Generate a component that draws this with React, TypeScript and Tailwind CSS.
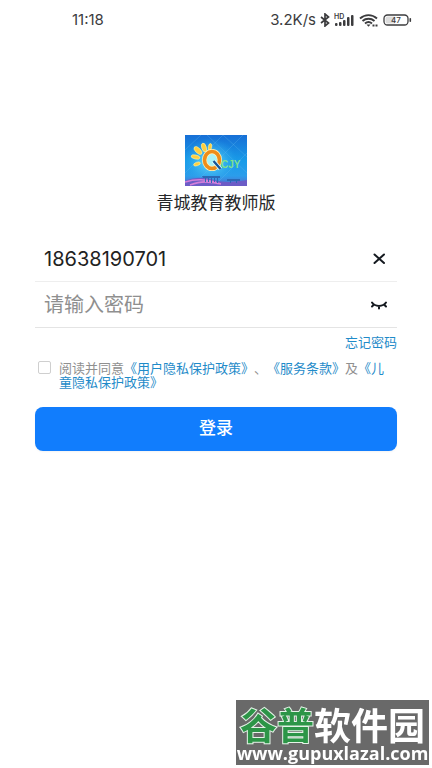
import { useState } from "react";

function StatusBar() {
  return (
    <header className="flex h-10 items-center justify-between pr-5 pl-18 text-[#3c3c3e]">
      <time className="text-[15px]">11:18</time>
      <div className="flex items-center gap-1">
        <span className="text-[15px]">3.2K/s</span>
        <svg width="10" height="14" viewBox="0 0 10 14" fill="none" stroke="currentColor" strokeWidth="1.7" aria-label="蓝牙">
          <path d="M1 4l7.500 6L5 13V1l3.500 3L1 10" />
        </svg>
        <svg width="21" height="14" viewBox="0 0 21 14" aria-label="信号">
          <text x="0" y="6" fontSize="7" fontWeight="600" fill="currentColor">HD</text>
          <g fill="currentColor">
            <rect x="1" y="10" width="2.500" height="3" rx="1" />
            <rect x="5" y="9" width="2.500" height="4" rx="1" />
            <rect x="9" y="7" width="2.500" height="6" rx="1" />
            <rect x="13" y="4" width="2.500" height="9" rx="1" />
            <rect x="17" y="2" width="2.500" height="11" rx="1" />
          </g>
        </svg>
        <svg width="19" height="14" viewBox="0 0 19 14" fill="none" stroke="currentColor" strokeWidth="1.9" aria-label="无线网络">
          <path d="M1 5.500C6 1 13 1 18 5.500M3.500 8c3.500-3 8.500-3 12 0M6 10.500c2-1.700 5-1.700 7 0" />
          <path d="M7.500 11.500h4L9.500 13.700z" fill="currentColor" stroke="none" />
          <path d="M13.500 12.500h5" strokeDasharray="2 1" />
        </svg>
        <svg width="29" height="12" viewBox="0 0 29 12" className="ml-px" aria-label="电量 47">
          <rect x="1" y="1" width="24" height="10" rx="3.500" fill="#fff" stroke="currentColor" strokeWidth="1.3" />
          <path d="M4.500 2.500H12v7H4.500A2 2 0 0 1 2.500 7.500v-3a2 2 0 0 1 2-2z" fill="#ddd" />
          <rect x="26.500" y="4" width="1.600" height="4" rx=".8" fill="currentColor" />
          <text x="13" y="9" fontSize="8" fontWeight="500" textAnchor="middle" fill="currentColor">47</text>
        </svg>
      </div>
    </header>
  );
}

function Logo() {
  return (
    <svg width="62" height="51" viewBox="0 0 62 51" role="img" aria-label="QCJY">
      <defs>
        <linearGradient id="sky" x1="0" y1="0" x2="0" y2="1">
          <stop offset="0" stopColor="#176fd6" />
          <stop offset=".5" stopColor="#189be8" />
          <stop offset=".8" stopColor="#2b9deb" />
          <stop offset="1" stopColor="#5568cb" />
        </linearGradient>
        <radialGradient id="glow">
          <stop offset="0" stopColor="#7ce8fb" />
          <stop offset="1" stopColor="#28a9ee" stopOpacity="0" />
        </radialGradient>
      </defs>
      <rect width="62" height="51" fill="url(#sky)" />
      <ellipse cx="25" cy="26" rx="27" ry="23" fill="url(#glow)" />
      <path d="M0 15L16 0M0 38L38 0M12 46L58 0M30 50L62 18M22 0l40 38M38 0l24 22" stroke="#67bdf2" strokeOpacity=".35" strokeWidth=".8" />
      <path d="M0 46c10-4 19-4 29-1s21 2 33 0v7H0z" fill="#6c5cc6" />
      <path d="M0 47c13-4 21-2 31 0M5 50c14-5 20-3 31-1" stroke="#d37ed9" strokeWidth="1.600" fill="none" />
      <path d="M17 41h18v2h-2v5h-1v-5h-2v4h-1v-4h-2v5h-1v-5h-2v4h-1v-4h-2v4h-1v-4h-2zM42 44h13v2h-3v2h-1v-2h-5v2h-1v-2h-3z" fill="#2b68b5" />
      <g fill="#ffce3d" stroke="#fff4a2" strokeWidth=".6">
        <ellipse cx="10.500" cy="22" rx="4.500" ry="2" transform="rotate(12 10.500 22)" />
        <ellipse cx="12" cy="29" rx="3.500" ry="1.700" transform="rotate(-20 12 29)" />
        <ellipse cx="13" cy="15.500" rx="5" ry="2.500" transform="rotate(45 13 15.500)" />
        <ellipse cx="19" cy="12.500" rx="4.500" ry="2.300" transform="rotate(72 19 12.500)" />
        <ellipse cx="25" cy="12" rx="3.500" ry="1.700" transform="rotate(100 25 12)" />
      </g>
      <ellipse cx="27" cy="25" rx="7.500" ry="8.500" fill="#a8f1f5" stroke="#fff4ba" strokeWidth="5" />
      <ellipse cx="27" cy="25" rx="7.500" ry="8.500" fill="none" stroke="#ee8d19" strokeWidth="3.600" />
      <path d="M28.500 26l7 8" stroke="#e9ffff" strokeWidth="4" />
      <path d="M28.500 26l7 8" stroke="#175695" strokeWidth="2.400" />
      <text x="36" y="33" fontSize="10" fontWeight="700" fill="#7fe08c" className="font-['Liberation_Sans',sans-serif]">CJY</text>
    </svg>
  );
}

function Watermark() {
  return (
    <aside className="fixed right-[3px] bottom-[3px] flex h-[65px] w-[193px] flex-col items-center bg-[#696969] whitespace-nowrap text-white">
      <strong className="mt-1 font-['Noto_Sans_CJK_SC',sans-serif] text-[37px] leading-[40px] font-bold">
        <span className="text-[#2c9547] [-webkit-text-stroke:2px_#e4f3e7] [paint-order:stroke_fill]">谷普</span>软件园
      </strong>
      <span className="font-['Open_Sans',sans-serif] text-[18px] leading-[18px] font-bold">www.gupuxlazal.com</span>
    </aside>
  );
}

export default function App() {
  const [account, setAccount] = useState("18638190701");
  const [password, setPassword] = useState("");
  const [visible, setVisible] = useState(false);
  const link = "text-[#1f8bc9]";

  return (
    <div className="min-h-screen bg-white font-['Inter','Noto_Sans_CJK_SC',sans-serif] [text-spacing-trim:space-all]">
      <StatusBar />
      <main className="px-[35px] pt-[95px]">
        <div className="flex flex-col items-center gap-[5px]">
          <Logo />
          <h1 className="text-[17px] leading-6 text-[#252729]">青城教育教师版</h1>
        </div>
        <form className="mt-[21px]" onSubmit={(e) => e.preventDefault()}>
          <div className="flex h-[46px] items-center border-b border-[#eeeeee] pr-2 pl-[9px]">
            <input
              aria-label="账号"
              className="min-w-0 flex-1 text-[20px] text-[#222222] outline-none"
              value={account}
              onChange={(e) => setAccount(e.target.value)}
            />
            <button type="button" aria-label="清除" onClick={() => setAccount("")}>
              <svg width="20" height="20" viewBox="0 0 20 20" fill="none" stroke="#151a20" strokeWidth="2" strokeLinecap="round">
                <path d="M5.500 5.500l9.500 8.500M15 5.500l-9.500 8.500" />
              </svg>
            </button>
          </div>
          <div className="flex h-[46px] items-center border-b border-[#e4e4e4] pr-2 pl-[9px]">
            <input
              aria-label="密码"
              type={visible ? "text" : "password"}
              placeholder="请输入密码"
              className="min-w-0 flex-1 text-[20px] text-[#222222] outline-none placeholder:text-[#8f8f8f]"
              value={password}
              onChange={(e) => setPassword(e.target.value)}
            />
            <button type="button" aria-label="显示密码" onClick={() => setVisible(!visible)}>
              <svg width="20" height="20" viewBox="0 0 20 20" fill="none" stroke="#151a20" strokeWidth="2" strokeLinecap="round">
                <path d="M3 7.500c3 4.500 11 4.500 14 0M5 9.500l-2 2M15 9.500l2 2M10 11v2.500" />
              </svg>
            </button>
          </div>
          <div className="flex justify-end pt-1">
            <a href="#forgot" className={`text-[13px] leading-5 ${link}`}>忘记密码</a>
          </div>
          <div className="mt-[9px] flex gap-2 pl-[3px]">
            <input
              id="agree"
              type="checkbox"
              className="size-[13px] shrink-0 appearance-none rounded-[2px] border border-[#cfcfcf] checked:bg-[#117dfd]"
            />
            <label htmlFor="agree" className="text-[13px] leading-[14px] text-[#909090]">
              阅读并同意<a href="#privacy" className={link}>《用户隐私保护政策》</a>、<a href="#terms" className={link}>《服务条款》</a>及<a href="#children" className={link}>《儿童隐私保护政策》</a>
            </label>
          </div>
          <button type="submit" className="mt-[18px] h-11 w-full rounded-lg bg-[#117dfd] text-[17px] font-medium text-white shadow-xs">
            登录
          </button>
        </form>
      </main>
      <Watermark />
    </div>
  );
}
